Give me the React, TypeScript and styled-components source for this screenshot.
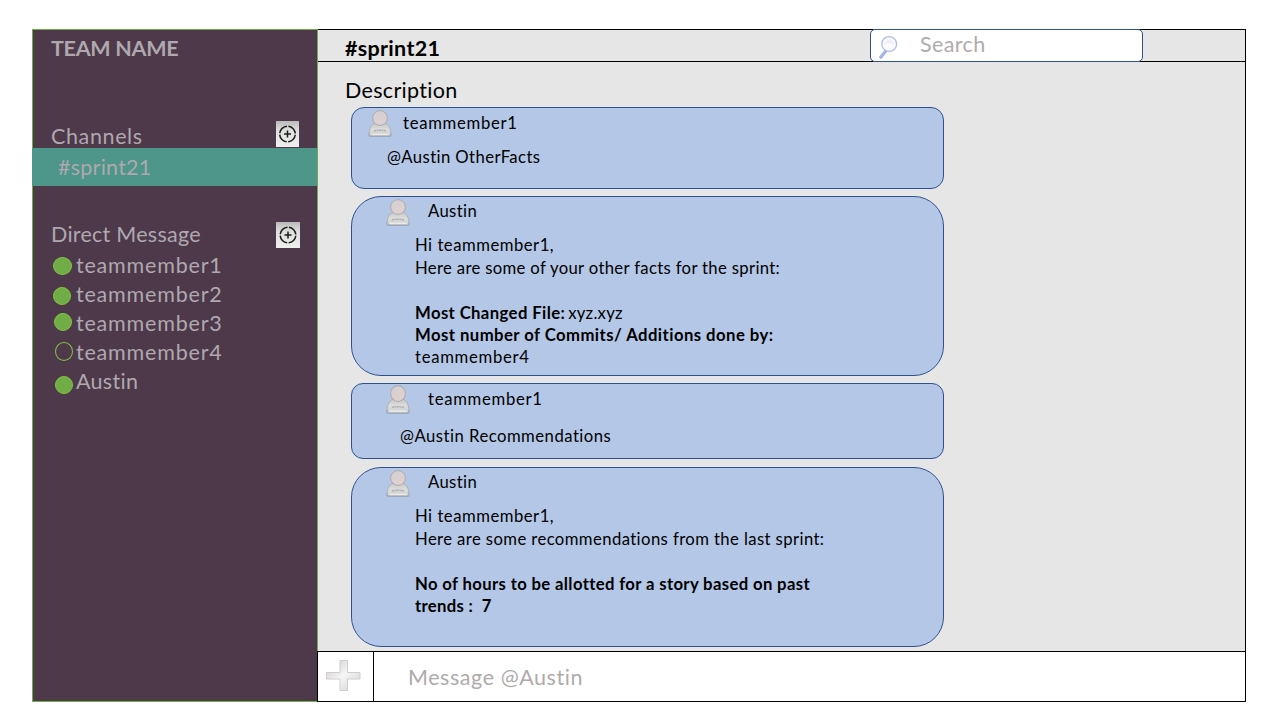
import React from 'react';
import styled, { createGlobalStyle } from 'styled-components';

const GlobalStyle = createGlobalStyle`
  *, *::before, *::after { box-sizing: border-box; }
  body { margin: 0; background: #fff; font-family: Lato, Carlito, "Liberation Sans", sans-serif; color: #000; }
`;

const Frame = styled.div`
  display: flex;
  width: 1214px;
  height: 673px;
  margin: 29px 0 0 32px;
`;

/* Shared text run: spacing is tuned per string */
const Text = styled.span<{ $ls?: number; $bold?: boolean }>`
  white-space: pre;
  letter-spacing: ${(p) => p.$ls ?? 0}px;
  font-weight: ${(p) => (p.$bold ? 700 : 400)};
`;

const Sidebar = styled.aside`
  display: flex;
  flex-direction: column;
  width: 286px;
  flex: none;
  border: 1px solid #70ad47;
  background: #4e394b;
  color: #afa8ae;
  font-size: 21.5px;
`;

const TeamName = styled.div`
  height: 91px;
  padding: 3px 0 0 18px;
  line-height: 30px;
`;

const SectionHead = styled.div<{ $pad: number }>`
  display: grid;
  grid-template-columns: 225px auto;
  justify-content: start;
  height: ${(p) => 24 + p.$pad}px;
  padding-left: 18px;
  line-height: 24px;

  & > ${Text} { padding-top: ${(p) => p.$pad}px; }
`;

const ActiveChannel = styled.div`
  height: 38px;
  margin: 0 0 36px -1px;
  padding-left: 26px;
  background: #4d9689;
  line-height: 38px;
`;

const AddButton = styled.button<{ $w: number }>`
  width: ${(p) => p.$w}px;
  height: 26px;
  padding: 0;
  border: 0;
  background: linear-gradient(#b9b9b9, #dedede 35%, #efefef);

  svg { display: block; width: 100%; height: 100%; }
`;

const Members = styled.ul`
  margin: 5px 0 0;
  padding: 0 0 0 20px;
  list-style: none;
`;

const Member = styled.li`
  display: flex;
  height: 29px;
  line-height: 28px;
`;

const DotSlot = styled.div`
  width: 23px;
  flex: none;
`;

const Dot = styled.div<{ $x: number; $y: number; $w: number; $h: number; $off?: boolean }>`
  width: ${(p) => p.$w}px;
  height: ${(p) => p.$h}px;
  margin: ${(p) => p.$y}px 0 0 ${(p) => p.$x}px;
  border: 1px solid #82c341;
  border-radius: 50%;
  background: ${(p) => (p.$off ? 'transparent' : '#70ad47')};
`;

const Main = styled.main`
  display: flex;
  flex-direction: column;
  flex: 1;
  min-width: 0;
  border-right: 1px solid #000;
  background: #e6e6e6;
`;

const TopBar = styled.header`
  display: flex;
  height: 33px;
  flex: none;
  border: solid #000;
  border-width: 1px 0;
  font-size: 21.5px;
`;

const ChannelTitle = styled.div`
  width: 552px;
  padding: 5px 0 0 27px;
  line-height: 26px;
`;

const SearchBox = styled.div`
  display: flex;
  width: 273px;
  height: 33px;
  margin-top: -1px;
  padding-left: 7px;
  border: 1px solid #2f528f;
  border-radius: 5px;
  background: #fff;
  color: #afabab;
  line-height: 28px;

  svg { flex: none; margin: 5px 20px 0 0; }
`;

const Feed = styled.section`
  flex: 1;
  min-height: 0;
  padding: 14px 0 0 33px;
`;

const Description = styled.div`
  height: 31px;
  margin-left: -6px;
  font-size: 21.5px;
  line-height: 28px;
`;

const Bubble = styled.article<{ $h: number; $r: number; $pad: number; $gap: number }>`
  width: 593px;
  height: ${(p) => p.$h}px;
  margin-bottom: ${(p) => p.$gap}px;
  padding-top: ${(p) => p.$pad}px;
  border: 1px solid #2f528f;
  border-radius: ${(p) => p.$r}px;
  background: #b4c7e7;
  font-size: 16.7px;
  line-height: 22px;
`;

const Author = styled.div<{ $h: number; $left: number; $name: number; $drop: number }>`
  display: flex;
  height: ${(p) => p.$h}px;
  padding-left: ${(p) => p.$left}px;

  svg { flex: none; margin-right: ${(p) => p.$name}px; }
  & > ${Text} { padding-top: ${(p) => p.$drop}px; }
`;

const Body = styled.div<{ $left: number }>`
  padding-left: ${(p) => p.$left}px;
`;

const Line = styled.div<{ $after?: number }>`
  display: flex;
  height: 22px;
  margin-bottom: ${(p) => p.$after ?? 0}px;
`;

const Value = styled(Text)`
  margin-left: 3px;
`;

const Composer = styled.footer`
  display: flex;
  height: 51px;
  flex: none;
  margin: 0 -1px 0 -1px;
  border: 1px solid #000;
  background: #fff;
  color: #afabab;
  font-size: 21.5px;
`;

const Attach = styled.div`
  width: 56px;
  padding: 7px 0 0 7px;
  border-right: 1px solid #000;

  svg { display: block; }
`;

const Draft = styled.div`
  padding: 11px 0 0 34px;
  line-height: 28px;
`;

const TargetIcon = () => (
  <svg viewBox="0 0 23 26" fill="none" stroke="#1c1c1c">
    <circle cx="11.5" cy="13" r="7.8" strokeWidth="1.5" strokeDasharray="10.75 1.5" strokeDashoffset="-0.75" />
    <path d="M11.5 9.5v7M8 13h7" strokeWidth="1.5" />
  </svg>
);

const SearchIcon = () => (
  <svg width="22" height="26" viewBox="0 0 22 26" fill="none">
    <path d="M7.400 16.400 2.800 22.300" stroke="#a3b4e8" strokeWidth="3.2" strokeLinecap="round" />
    <circle cx="11.200" cy="9" r="7.400" fill="#fbfbff" stroke="#b0bdea" strokeWidth="1.300" />
    <path d="M6.600 9.200a4.600 4.600 0 0 1 9.200 0c-3-1.200-6-1.200-9.200 0z" fill="#eff0f8" />
  </svg>
);

const Avatar = ({ h = 27 }: { h?: number }) => (
  <svg width="24" height={h} viewBox="0 0 24 27" preserveAspectRatio="none">
    <defs>
      <linearGradient id="torso" x1="0" y1="0" x2="0" y2="1">
        <stop offset="0" stopColor="#c4c4c4" />
        <stop offset="0.45" stopColor="#dcdcdc" />
        <stop offset="1" stopColor="#cfcfcf" />
      </linearGradient>
      <linearGradient id="head" x1="0" y1="0" x2="0.3" y2="1">
        <stop offset="0" stopColor="#d2cfd0" />
        <stop offset="1" stopColor="#e0d0d1" />
      </linearGradient>
    </defs>
    <rect x="0.300" y="22" width="23.400" height="5" rx="2" fill="#8496b8" opacity="0.600" />
    <path d="M7 13H17C20.500 14.500 22.800 18.500 22.800 23.500C22.800 25.200 22.200 26 20.500 26H3.500C1.800 26 1.200 25.200 1.200 23.500C1.200 18.500 3.500 14.500 7 13Z" fill="url(#torso)" stroke="#a3a5a8" strokeWidth="0.700" />
    <path d="M3.500 24.300H20.500" stroke="#eeeeee" strokeWidth="1.200" />
    <path d="M6 20.900Q12 19.600 18 20.900" fill="none" stroke="#b0b0b0" strokeWidth="1.500" strokeDasharray="2 0.500" />
    <circle cx="12" cy="8" r="7.400" fill="url(#head)" stroke="#adabaf" strokeWidth="1" />
  </svg>
);

const PlusIcon = () => (
  <svg width="38" height="34" viewBox="0 0 38 34">
    <defs>
      <linearGradient id="plus" x1="0" y1="0" x2="1" y2="1">
        <stop offset="0.2" stopColor="#dcdadb" />
        <stop offset="0.5" stopColor="#f6f5f5" />
        <stop offset="0.8" stopColor="#e0dfdf" />
      </linearGradient>
    </defs>
    <path d="M15 1.500H22.500V13.500H35V20H22.500V31.500H15V20H1.500V13.500H15Z" fill="url(#plus)" stroke="#d0cece" strokeLinejoin="round" />
  </svg>
);

const members = [
  { name: 'teammember1', ls: 0.8, x: 0, y: 6, w: 19, h: 18 },
  { name: 'teammember2', ls: 0.8, x: 0, y: 7, w: 18, h: 18 },
  { name: 'teammember3', ls: 0.8, x: 1, y: 4, w: 18, h: 18 },
  { name: 'teammember4', ls: 0.8, x: 2, y: 4, w: 18, h: 19, off: true },
  { name: 'Austin', ls: 0.3, x: 2, y: 9, w: 18, h: 18 },
];

export default function App() {
  return (
    <>
      <GlobalStyle />
      <Frame>
        <Sidebar>
          <TeamName><Text $bold $ls={-0.3}>TEAM NAME</Text></TeamName>
          <SectionHead $pad={3}>
            <Text $ls={0.62}>Channels</Text>
            <AddButton $w={23} aria-label="Add channel"><TargetIcon /></AddButton>
          </SectionHead>
          <ActiveChannel><Text $ls={0.25}>#sprint21</Text></ActiveChannel>
          <SectionHead $pad={0}>
            <Text $ls={0.26}>Direct Message</Text>
            <AddButton $w={24} aria-label="New message"><TargetIcon /></AddButton>
          </SectionHead>
          <Members>
            {members.map((m) => (
              <Member key={m.name}>
                <DotSlot><Dot $x={m.x} $y={m.y} $w={m.w} $h={m.h} $off={m.off} /></DotSlot>
                <Text $ls={m.ls}>{m.name}</Text>
              </Member>
            ))}
          </Members>
        </Sidebar>
        <Main>
          <TopBar>
            <ChannelTitle><Text $bold $ls={0.3}>#sprint21</Text></ChannelTitle>
            <SearchBox><SearchIcon /><Text $ls={0.38}>Search</Text></SearchBox>
          </TopBar>
          <Feed>
            <Description><Text $ls={0.32}>Description</Text></Description>
            <Bubble $h={82} $r={13} $pad={2} $gap={7}>
              <Author $h={36} $left={16} $name={11} $drop={2}>
                <Avatar /><Text $ls={0.7}>teammember1</Text>
              </Author>
              <Body $left={35}>
                <Line><Text $ls={0.4}>@Austin OtherFacts</Text></Line>
              </Body>
            </Bubble>
            <Bubble $h={180} $r={30} $pad={2} $gap={7}>
              <Author $h={35} $left={34} $name={18} $drop={1}>
                <Avatar /><Text $ls={0.36}>Austin</Text>
              </Author>
              <Body $left={63}>
                <Line $after={1}><Text $ls={0.5}>Hi teammember1,</Text></Line>
                <Line $after={23}><Text $ls={0.33}>Here are some of your other facts for the sprint:</Text></Line>
                <Line><Text $bold $ls={0.39}>Most Changed File:</Text><Value $ls={0.26}>xyz.xyz</Value></Line>
                <Line><Text $bold $ls={0.45}>Most number of Commits/ Additions done by:</Text></Line>
                <Line><Text $ls={0.7}>teammember4</Text></Line>
              </Body>
            </Bubble>
            <Bubble $h={76} $r={12} $pad={1} $gap={8}>
              <Author $h={40} $left={34} $name={18} $drop={3}>
                <Avatar h={29} /><Text $ls={0.7}>teammember1</Text>
              </Author>
              <Body $left={48}>
                <Line><Text $ls={0.48}>@Austin Recommendations</Text></Line>
              </Body>
            </Bubble>
            <Bubble $h={180} $r={30} $pad={2} $gap={0}>
              <Author $h={35} $left={34} $name={18} $drop={1}>
                <Avatar /><Text $ls={0.36}>Austin</Text>
              </Author>
              <Body $left={63}>
                <Line $after={1}><Text $ls={0.5}>Hi teammember1,</Text></Line>
                <Line $after={23}><Text $ls={0.4}>Here are some recommendations from the last sprint:</Text></Line>
                <Line><Text $bold $ls={0.36}>No of hours to be allotted for a story based on past</Text></Line>
                <Line><Text $bold $ls={0.3}>{'trends :  7'}</Text></Line>
              </Body>
            </Bubble>
          </Feed>
          <Composer>
            <Attach><PlusIcon /></Attach>
            <Draft><Text $ls={0.56}>Message @Austin</Text></Draft>
          </Composer>
        </Main>
      </Frame>
    </>
  );
}
